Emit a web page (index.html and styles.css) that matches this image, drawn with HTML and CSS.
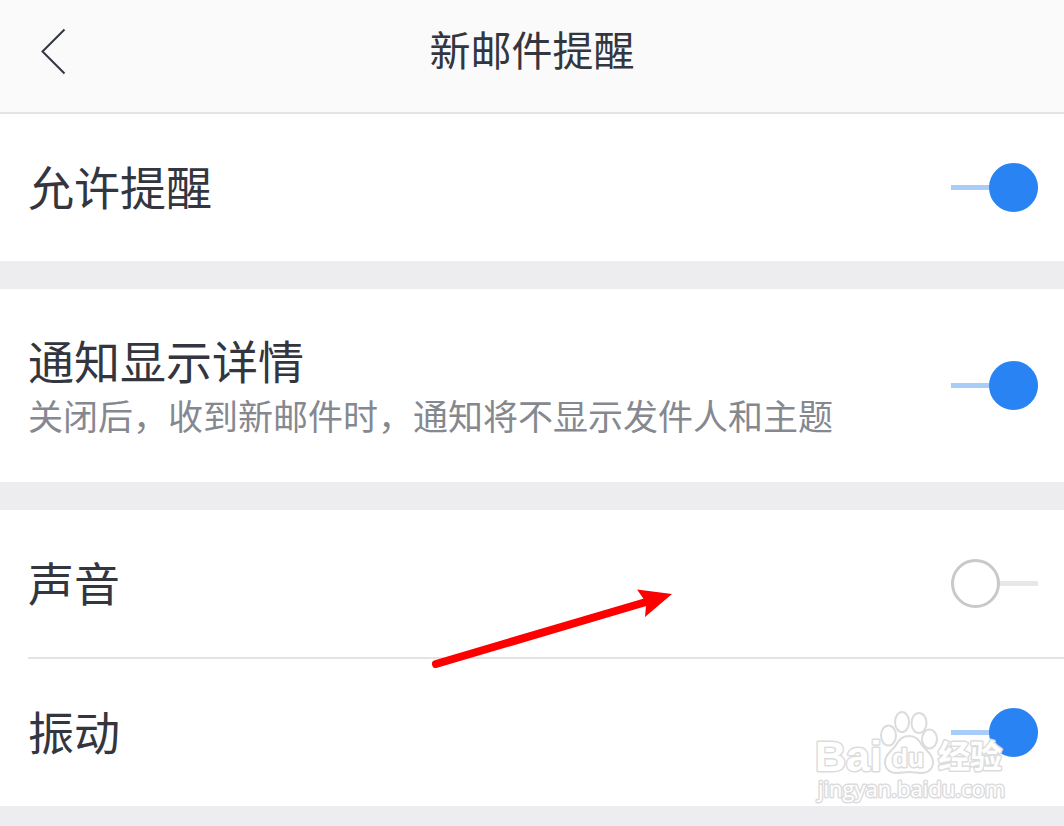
FILE: index.html
```html
<!DOCTYPE html>
<html lang="zh-CN">
<head>
<meta charset="utf-8">
<meta name="viewport" content="width=device-width, initial-scale=1">
<title>新邮件提醒</title>
<link rel="stylesheet" href="styles.css">
</head>
<body class="page">
<header class="header">
  <button class="back" type="button" aria-label="返回">
    <svg class="back-icon" width="28" height="48" viewBox="0 0 28 48" aria-hidden="true"><path d="M25.5 2.500 3.500 24.500 25.500 46.500" fill="none" stroke="#33363f" stroke-width="2"/></svg>
  </button>
  <h1 class="title">新邮件提醒</h1>
</header>
<main class="settings">
  <section class="group">
    <label class="row"><span class="name">允许提醒</span><input class="switch" type="checkbox" checked></label>
  </section>
  <section class="group">
    <label class="row row-tall"><span class="text"><span class="name">通知显示详情</span><span class="hint">关闭后，收到新邮件时，通知将不显示发件人和主题</span></span><input class="switch" type="checkbox" checked></label>
  </section>
  <section class="group">
    <label class="row"><span class="name">声音</span><input class="switch" type="checkbox"></label>
    <hr class="divider">
    <label class="row"><span class="name">振动</span><input class="switch" type="checkbox" checked></label>
    <svg class="arrow" width="240" height="84" viewBox="0 0 240 84" aria-hidden="true">
      <path d="M6 74 216 12" stroke="#f00" stroke-width="8" stroke-linecap="round"/>
      <path d="M207 -.5 242 4 215 27 216 16 213 8Z" fill="#f00"/>
    </svg>
    <svg class="watermark" width="200" height="100" viewBox="812 706 200 100" role="img" aria-label="Baidu 经验">
      <g class="mark">
        <ellipse cx="888.500" cy="735.500" rx="7.500" ry="10"/>
        <ellipse cx="902" cy="722" rx="7" ry="10"/>
        <ellipse cx="919" cy="723" rx="7.500" ry="10"/>
        <ellipse cx="929.500" cy="739" rx="7.500" ry="9.500"/>
        <path d="M909 736c-7 0-10 4-13 9-4 6-11 9-11 17 0 7 5 11 11 11 5 0 8-1 13-1s8 1 13 1c6 0 11-4 11-11 0-8-7-11-11-17-3-5-6-9-13-9Z"/>
        <text class="mark-logo" x="815" y="771">Bai</text>
        <text class="mark-du" x="892" y="767">du</text>
        <text class="mark-cn" x="938" y="768">经验</text>
        <text class="mark-url" x="818" y="797">jingyan.baidu.com</text>
      </g>
    </svg>
  </section>
</main>
</body>
</html>
```
FILE: styles.css
```css
* {
  box-sizing: border-box;
}

.page {
  margin: 0;
  min-height: 100vh;
  background: #ededef;
  color: #33363f;
  font-family: "Noto Sans CJK SC", sans-serif;
}

.header {
  display: grid;
  grid-template-columns: 80px 1fr 80px;
  align-items: center;
  padding: 19px 0 29px;
  background: #fafafa;
  border-bottom: 2px solid #e4e4e4;
}

.back {
  display: flex;
  justify-content: flex-end;
  padding: 0 13px 0 0;
  border: 0;
  background: none;
  cursor: pointer;
}

.title {
  margin: 0;
  padding-bottom: 6px;
  font-size: 41px;
  font-weight: 400;
  line-height: 58px;
  text-align: center;
}

.settings {
  display: flex;
  flex-direction: column;
  gap: 28px;
}

.group {
  position: relative;
  background: #fff;
}

.row {
  display: flex;
  align-items: center;
  justify-content: space-between;
  gap: 24px;
  min-height: 147px;
  padding: 40px 26px 40px 28px;
}

.row-tall {
  min-height: 193px;
}

.text {
  display: flex;
  flex-direction: column;
}

.name {
  padding-bottom: 6px;
  font-size: 46px;
  line-height: 58px;
}

.hint {
  padding-bottom: 6px;
  color: #85888f;
  font-size: 35px;
  line-height: 42px;
}

.divider {
  height: 2px;
  margin: 0 0 0 28px;
  border: 0;
  background: #e4e4e4;
}

.switch {
  appearance: none;
  display: flex;
  flex: none;
  align-items: center;
  width: 87px;
  height: 49px;
  margin: 0;
  background: linear-gradient(#e6e7e9, #e6e7e9) center / 100% 5px no-repeat;
  cursor: pointer;
}

.switch::before {
  content: "";
  width: 49px;
  height: 49px;
  box-sizing: border-box;
  border: 3px solid #c9c9c9;
  border-radius: 50%;
  background: #fff;
}

.switch:checked {
  justify-content: flex-end;
  background-image: linear-gradient(#a9cdf9, #a9cdf9);
}

.switch:checked::before {
  border-color: #2983f3;
  background: #2983f3;
}

.arrow {
  position: absolute;
  top: 80px;
  left: 430px;
  overflow: visible;
  pointer-events: none;
}

.watermark {
  position: absolute;
  right: 52px;
  bottom: 0;
  pointer-events: none;
}

.mark {
  fill: #fff;
  fill-opacity: 0.8;
  stroke: #dcdcdc;
  stroke-width: 2px;
}

.mark text {
  paint-order: stroke;
  stroke-width: 3px;
  stroke-linejoin: round;
  fill-opacity: 1;
}

.mark-logo {
  font: 700 43px "Liberation Sans", sans-serif;
}

.mark-du {
  font: 700 26px "Liberation Sans", sans-serif;
}

.mark-cn {
  font: 700 32px "Noto Sans CJK SC", sans-serif;
}

.mark-url {
  font: 400 22px "Open Sans", sans-serif;
}
```
